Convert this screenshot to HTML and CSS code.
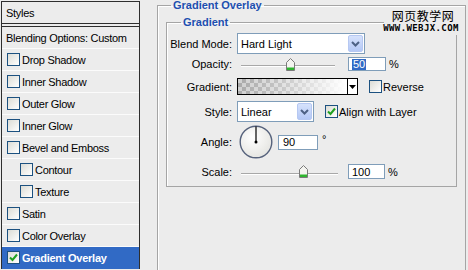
FILE: index.html
```html
<!DOCTYPE html>
<html lang="en">
<head>
    <meta charset="UTF-8">
    <meta name="viewport" content="width=device-width, initial-scale=1.0">
    <title>Layer Style - Gradient Overlay</title>
    <link rel="stylesheet" href="styles.css">
</head>
<body>
    <div class="dialog">
        <ul class="style-list">
            <li class="list-head">Styles</li>
            <li class="blend">Blending Options: Custom</li>
            <li><span class="check"></span>Drop Shadow</li>
            <li><span class="check"></span>Inner Shadow</li>
            <li><span class="check"></span>Outer Glow</li>
            <li><span class="check"></span>Inner Glow</li>
            <li><span class="check"></span>Bevel and Emboss</li>
            <li class="sub"><span class="check"></span>Contour</li>
            <li class="sub"><span class="check"></span>Texture</li>
            <li><span class="check"></span>Satin</li>
            <li><span class="check"></span>Color Overlay</li>
            <li class="selected">
                <span class="check"><svg width="11" height="11" viewBox="0 0 11 11"><polyline points="2,5.5 4.5,8 9,2.5" fill="none" stroke="#21a121" stroke-width="2"/></svg></span>Gradient Overlay
            </li>
        </ul>

        <fieldset class="panel">
            <legend>Gradient Overlay</legend>

            <fieldset class="group">
                <legend>Gradient</legend>

                <div class="row row-blend">
                    <label>Blend Mode:</label>
                    <div class="select select-mode">
                        <span>Hard Light</span>
                        <span class="drop"><svg width="13" height="15" viewBox="0 0 13 15"><polyline points="3,6 6.5,9.5 10,6" fill="none" stroke="#4d6185" stroke-width="2"/></svg></span>
                    </div>
                </div>

                <div class="row row-opacity">
                    <label>Opacity:</label>
                    <div class="slider">
                        <div class="track"></div>
                        <span class="thumb" style="left: 45px"><svg width="9" height="13" viewBox="0 0 9 13"><path d="M0.5 4.5 L4.5 0.5 L8.5 4.5 L8.5 12.5 L0.5 12.5 Z" fill="#f4f4f0" stroke="#7a7a7a"/><rect x="1" y="9.5" width="7" height="2.5" fill="#2fb52f"/></svg></span>
                    </div>
                    <div class="field field-num"><span class="hilite">50</span></div>
                    <span class="unit">%</span>
                </div>

                <div class="row row-gradient">
                    <label>Gradient:</label>
                    <div class="gradient-pick">
                        <span class="swatch"></span>
                        <span class="mini-drop"><svg width="7" height="4" viewBox="0 0 7 4"><path d="M0 0 L7 0 L3.5 4 Z" fill="#000"/></svg></span>
                    </div>
                    <span class="check check-gap"></span>
                    <span class="check-label">Reverse</span>
                </div>

                <div class="row row-style">
                    <label>Style:</label>
                    <div class="select select-style">
                        <span>Linear</span>
                        <span class="drop"><svg width="13" height="15" viewBox="0 0 13 15"><polyline points="3,6 6.5,9.5 10,6" fill="none" stroke="#4d6185" stroke-width="2"/></svg></span>
                    </div>
                    <span class="check check-gap"><svg width="11" height="11" viewBox="0 0 11 11"><polyline points="2,5.5 4.5,8 9,2.5" fill="none" stroke="#21a121" stroke-width="2"/></svg></span>
                    <span class="check-label">Align with Layer</span>
                </div>

                <div class="row row-angle">
                    <label>Angle:</label>
                    <svg class="dial" width="34" height="34" viewBox="0 0 34 34">
                        <defs>
                            <radialGradient id="dialFill" cx="0.4" cy="0.35" r="0.7">
                                <stop offset="0" stop-color="#ffffff"/>
                                <stop offset="1" stop-color="#e4e4e0"/>
                            </radialGradient>
                        </defs>
                        <circle cx="17" cy="17" r="15.8" fill="url(#dialFill)" stroke="#56627c" stroke-width="1.4"/>
                        <line x1="17" y1="17" x2="17" y2="1.5" stroke="#000" stroke-width="1.2"/>
                        <circle cx="17" cy="17" r="1.5" fill="#000"/>
                    </svg>
                    <div class="field field-angle">90</div>
                    <span class="degree">°</span>
                </div>

                <div class="row row-scale">
                    <label>Scale:</label>
                    <div class="slider slider-scale">
                        <div class="track"></div>
                        <span class="thumb" style="left: 58px"><svg width="9" height="13" viewBox="0 0 9 13"><path d="M0.5 4.5 L4.5 0.5 L8.5 4.5 L8.5 12.5 L0.5 12.5 Z" fill="#f4f4f0" stroke="#7a7a7a"/><rect x="1" y="9.5" width="7" height="2.5" fill="#2fb52f"/></svg></span>
                    </div>
                    <div class="field field-scale">100</div>
                    <span class="unit">%</span>
                </div>
            </fieldset>
        </fieldset>

        <div class="watermark">
            <span class="wm-cn">网页教学网</span>
            <span class="wm-url">WWW.WEBJX.COM</span>
        </div>
    </div>
</body>
</html>
```

FILE: styles.css
```css
* {
    margin: 0;
    padding: 0;
    box-sizing: border-box;
}

body {
    background: #ececec;
    font-family: "Liberation Sans", Arial, sans-serif;
    font-size: 11px;
    color: #000;
    width: 468px;
    height: 270px;
    overflow: hidden;
}

.dialog {
    position: relative;
    display: flex;
    align-items: flex-start;
}

/* Left list of styles */
.style-list {
    list-style: none;
    width: 139px;
    margin: 1px 0 0 1px;
    border: 1px solid #2e2e2e;
    border-bottom: 0;
    background: #ececec;
    flex-shrink: 0;
}

.style-list li {
    display: flex;
    align-items: center;
    gap: 2px;
    height: 22px;
    padding-left: 5px;
    border-bottom: 1px solid #fbfbfb;
    letter-spacing: -0.3px;
    white-space: nowrap;
}

.style-list .list-head {
    height: 25px;
    padding-left: 4px;
    border-bottom: 4px double #2e2e2e;
}

.style-list .blend {
    padding-left: 4px;
}

.style-list .sub {
    padding-left: 18px;
}

.style-list .selected {
    background: #316ac5;
    color: #fff;
    font-weight: bold;
    letter-spacing: -0.25px;
    border-bottom-color: #316ac5;
}

.check {
    width: 13px;
    height: 13px;
    flex-shrink: 0;
    border: 1px solid #1c5180;
    background: linear-gradient(135deg, #dcdcd5, #ffffff);
    display: flex;
    align-items: center;
    justify-content: center;
}

.check svg {
    display: block;
}

/* Right panel */
.panel {
    margin-left: 17px;
    width: 309px;
    height: 270px;
    border: 1px solid #a5a5a5;
    border-bottom: 0;
    box-shadow: inset 1px 1px 0 #fff;
    flex-shrink: 0;
}

.panel > legend,
.group > legend {
    font-weight: bold;
    color: #1d4fb0;
    line-height: 11px;
    padding: 0 2px;
}

.panel > legend {
    margin-left: 13px;
}

.group {
    margin: 6px 8px 0;
    border: 1px solid #a5a5a5;
    box-shadow: inset 1px 1px 0 #fff;
    padding-bottom: 7px;
}

.group > legend {
    margin-left: 14px;
}

.row {
    display: flex;
    align-items: center;
}

.row label {
    width: 65px;
    margin-right: 5px;
    text-align: right;
    flex-shrink: 0;
}

.row-blend { margin-top: 5px; height: 21px; }
.row-opacity { margin-top: 3px; height: 14px; }
.row-gradient { margin-top: 7px; height: 17px; }
.row-style { margin-top: 6px; height: 21px; }
.row-angle { margin-top: 3px; height: 34px; }
.row-scale { margin-top: 5px; height: 15px; }

/* Dropdowns */
.select {
    display: flex;
    align-items: center;
    height: 21px;
    padding-left: 3px;
    border: 1px solid #7f9db9;
    background: #fff;
}

.select-mode { width: 128px; }
.select-style { width: 77px; }

.drop {
    margin-left: auto;
    margin-right: 1px;
    width: 15px;
    height: 17px;
    border: 1px solid #b6c8f2;
    border-radius: 2px;
    background: linear-gradient(#d6e2fc, #b4c8f6);
    display: flex;
    align-items: center;
    justify-content: center;
}

/* Sliders */
.slider {
    position: relative;
    width: 94px;
    height: 14px;
    margin-left: 4px;
    display: flex;
    align-items: center;
}

.slider-scale {
    width: 97px;
    height: 15px;
}

.track {
    width: 100%;
    height: 2px;
    margin-top: 4px;
    border-top: 1px solid #a8a8a8;
    border-bottom: 1px solid #fff;
}

.thumb {
    position: absolute;
    top: 1px;
}

.thumb svg {
    display: block;
}

/* Number fields */
.field {
    height: 14px;
    border: 1px solid #7f9db9;
    background: #fff;
    padding-left: 3px;
    display: flex;
    align-items: center;
}

.field-num {
    width: 38px;
    margin-left: 13px;
}

.field-scale {
    width: 37px;
    height: 15px;
    margin-left: 10px;
}

.field-angle {
    width: 40px;
    height: 15px;
    margin-left: 5px;
    padding-left: 4px;
}

.hilite {
    background: #316ac5;
    color: #fff;
    padding: 0 1px;
    line-height: 11px;
}

.unit {
    margin-left: 3px;
}

.degree {
    align-self: flex-start;
    margin-top: 8px;
    margin-left: 4px;
}

/* Gradient picker */
.gradient-pick {
    display: flex;
    width: 121px;
    height: 17px;
    border: 1px solid #000;
}

.swatch {
    flex: 1;
    background:
        linear-gradient(to right, rgba(255, 255, 255, 0) 0%, rgba(255, 255, 255, 0.3) 35%, #fff 100%),
        repeating-conic-gradient(#a9a9a9 0 25%, #d0d0d0 0 50%) 0 0 / 8px 8px;
}

.mini-drop {
    width: 10px;
    border-left: 1px solid #000;
    background: #fff;
    display: flex;
    align-items: center;
    justify-content: center;
}

.check-gap {
    margin-left: 11px;
}

.check-label {
    margin-left: 1px;
}

.dial {
    margin-left: 2px;
    display: block;
}

/* Watermark stamped on the screenshot */
.watermark {
    position: absolute;
    left: 384px;
    top: 8px;
    width: 74px;
    padding-bottom: 2px;
    background: #ececec;
    display: flex;
    flex-direction: column;
    align-items: center;
}

.wm-cn {
    font-family: "Noto Sans CJK SC", sans-serif;
    font-size: 12px;
    line-height: 15px;
    letter-spacing: 0.5px;
    margin-left: 4px;
}

.wm-url {
    font-family: "DejaVu Sans Mono", monospace;
    font-weight: bold;
    font-size: 9px;
    line-height: 10px;
    letter-spacing: 0.4px;
}
```
